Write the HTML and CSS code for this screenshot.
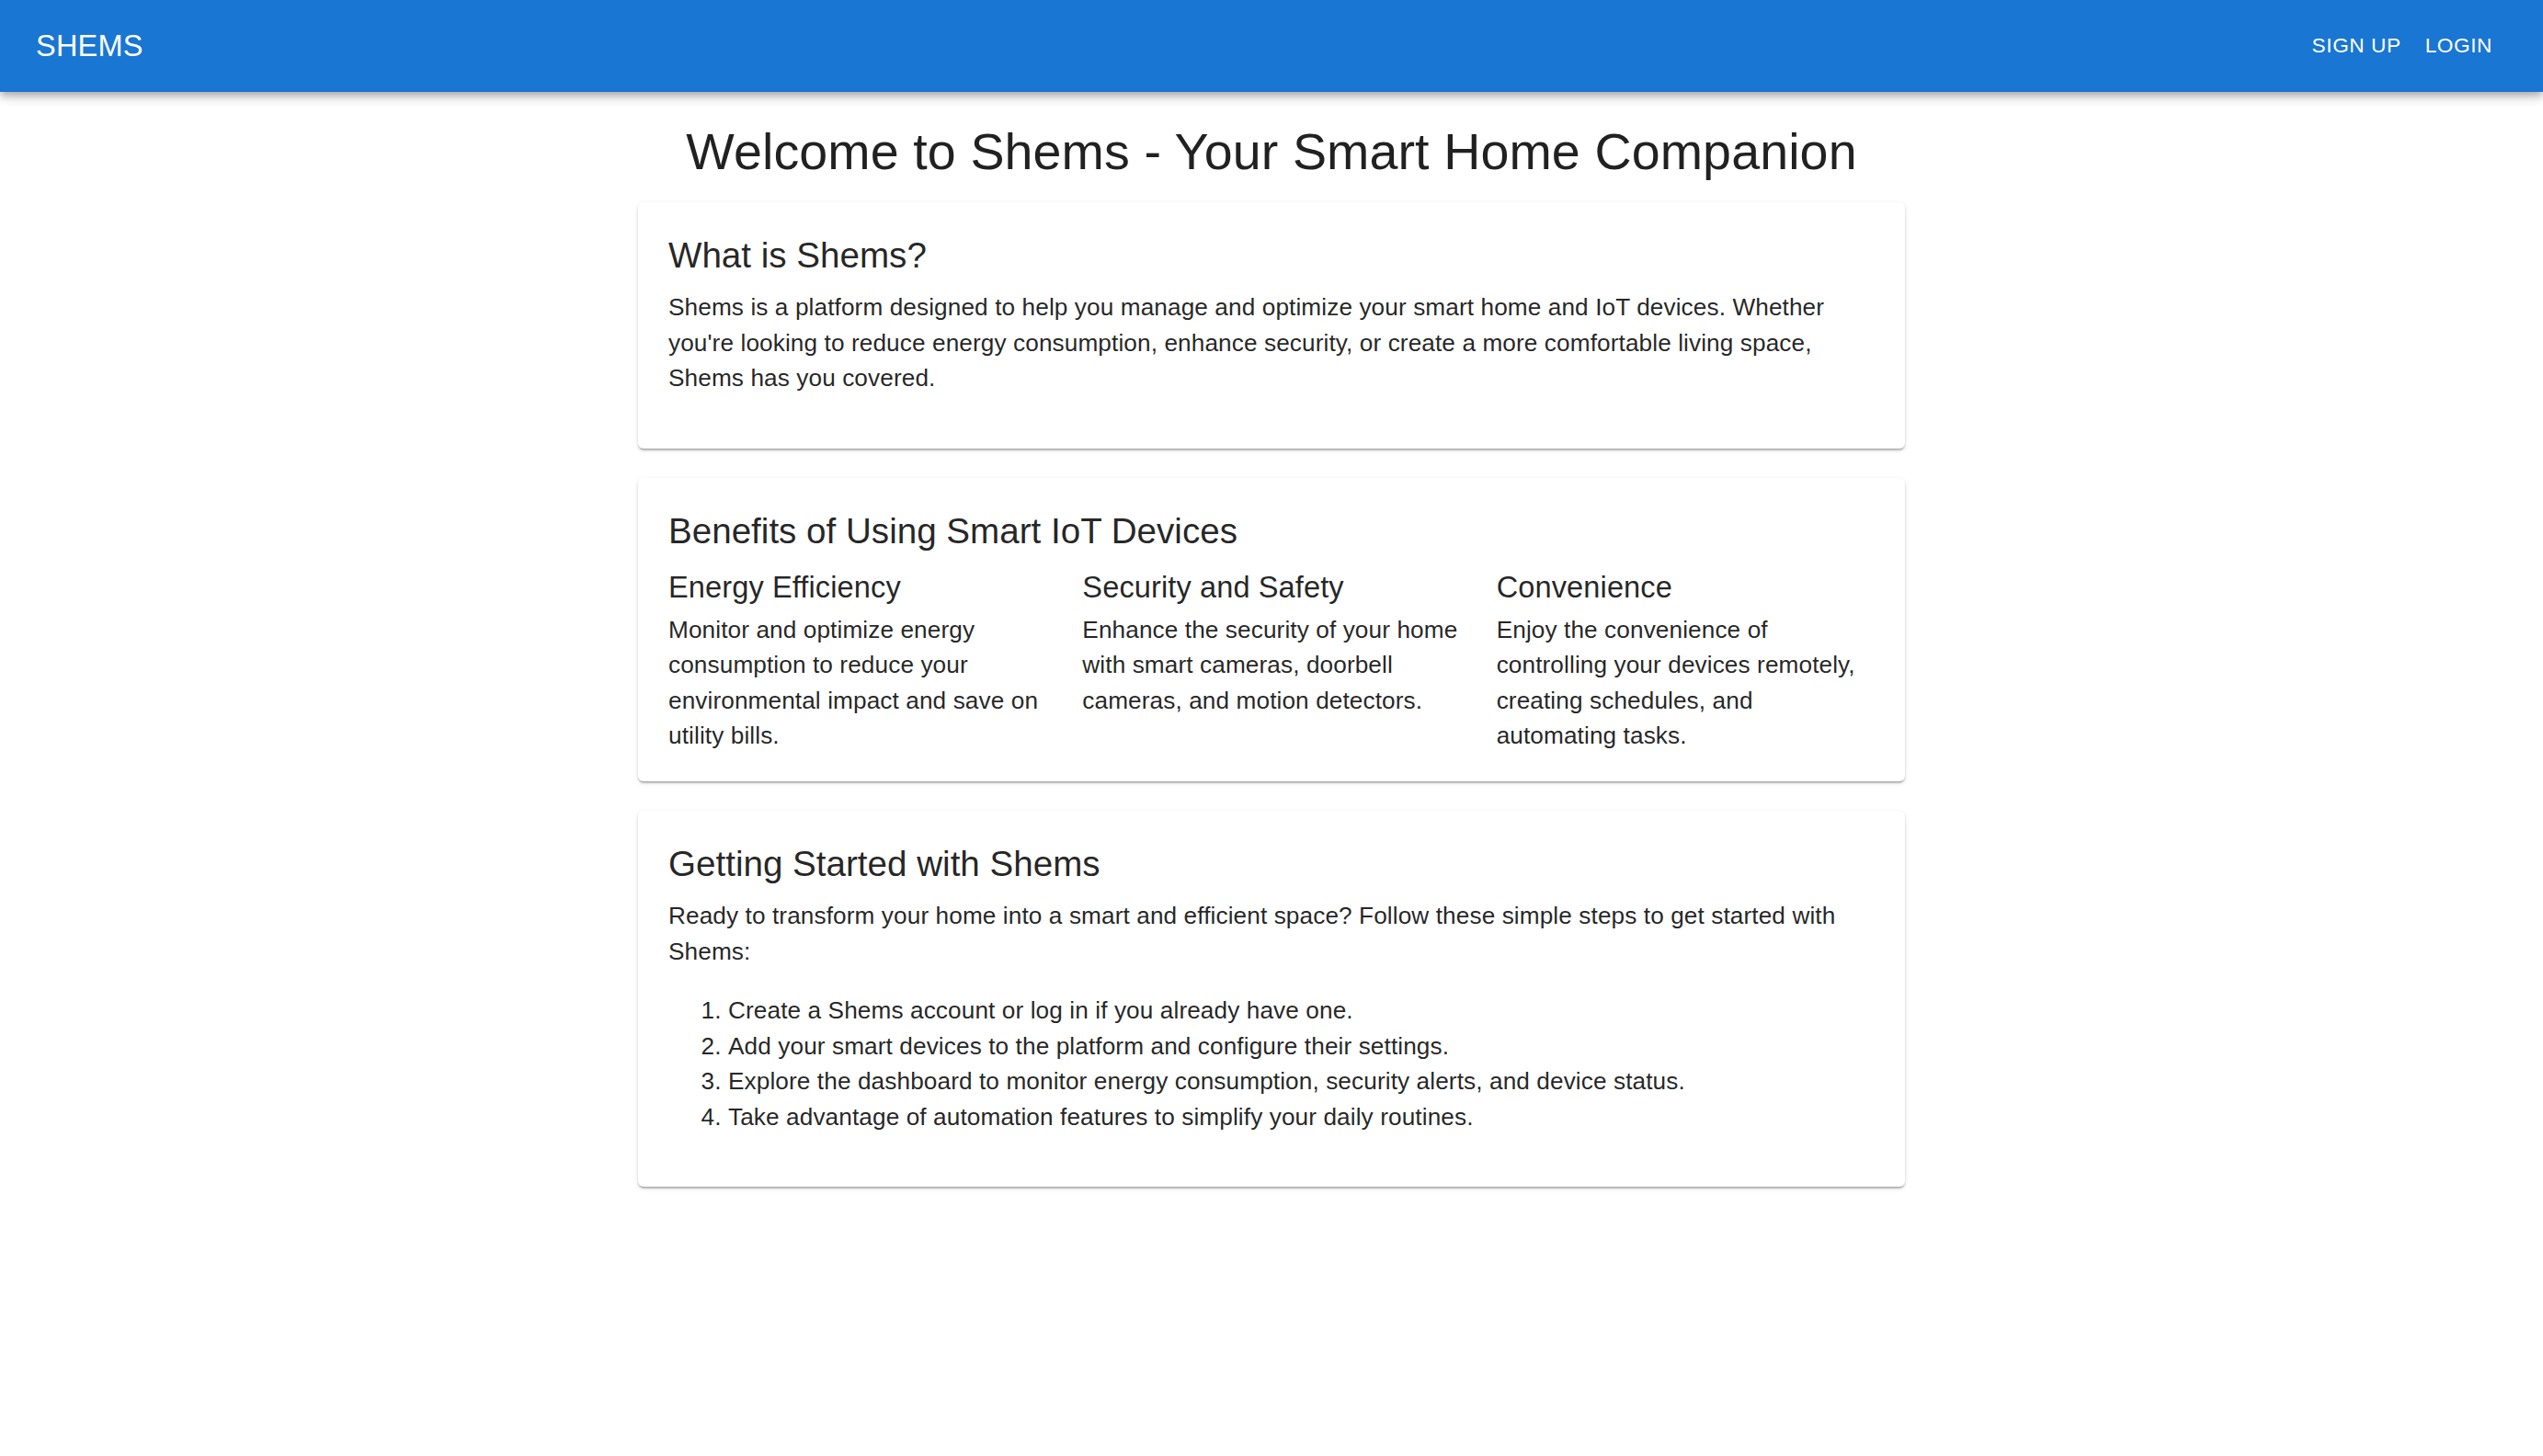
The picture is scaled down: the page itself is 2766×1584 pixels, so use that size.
FILE: index.html
```html
<!DOCTYPE html>
<html lang="en">
<head>
<meta charset="utf-8">
<title>Shems</title>
<link rel="stylesheet" href="styles.css">
</head>
<body>
<header class="appbar">
  <div class="brand">SHEMS</div>
  <nav class="nav">
    <a class="nav-btn" href="#">Sign Up</a>
    <a class="nav-btn" href="#">Login</a>
  </nav>
</header>
<main class="container">
  <h1 class="page-title">Welcome to Shems - Your Smart Home Companion</h1>

  <section class="card">
    <h2 class="card-title">What is Shems?</h2>
    <p class="body-text para">Shems is a platform designed to help you manage and optimize your smart home and IoT devices. Whether you're looking to reduce energy consumption, enhance security, or create a more comfortable living space, Shems has you covered.</p>
  </section>

  <section class="card card-benefits">
    <h2 class="card-title">Benefits of Using Smart IoT Devices</h2>
    <div class="benefits">
      <div class="benefit">
        <h3 class="sub-title">Energy Efficiency</h3>
        <p class="body-text">Monitor and optimize energy consumption to reduce your environmental impact and save on utility bills.</p>
      </div>
      <div class="benefit">
        <h3 class="sub-title">Security and Safety</h3>
        <p class="body-text">Enhance the security of your home with smart cameras, doorbell cameras, and motion detectors.</p>
      </div>
      <div class="benefit">
        <h3 class="sub-title">Convenience</h3>
        <p class="body-text">Enjoy the convenience of controlling your devices remotely, creating schedules, and automating tasks.</p>
      </div>
    </div>
  </section>

  <section class="card">
    <h2 class="card-title">Getting Started with Shems</h2>
    <p class="body-text">Ready to transform your home into a smart and efficient space? Follow these simple steps to get started with Shems:</p>
    <ol class="steps body-text">
      <li>Create a Shems account or log in if you already have one.</li>
      <li>Add your smart devices to the platform and configure their settings.</li>
      <li>Explore the dashboard to monitor energy consumption, security alerts, and device status.</li>
      <li>Take advantage of automation features to simplify your daily routines.</li>
    </ol>
  </section>
</main>
</body>
</html>
```

FILE: styles.css
```css
* { box-sizing: border-box; }

html, body {
  margin: 0;
  padding: 0;
  background: #ffffff;
  font-family: "Liberation Sans", Arial, Helvetica, sans-serif;
  color: rgba(0, 0, 0, 0.87);
}

.appbar {
  height: 100px;
  background: #1976d2;
  color: #ffffff;
  display: flex;
  align-items: center;
  justify-content: space-between;
  padding: 0 39px;
  box-shadow: 0 3px 7px -2px rgba(0, 0, 0, 0.2), 0 7px 8px 0 rgba(0, 0, 0, 0.14), 0 2px 16px 0 rgba(0, 0, 0, 0.12);
  position: relative;
  z-index: 1;
}

.brand {
  font-size: 32.5px;
  font-weight: 400;
  letter-spacing: 0.2px;
  line-height: 1.6;
}

.nav {
  display: flex;
  align-items: center;
  margin-right: 3px;
}

.nav-btn {
  color: #ffffff;
  text-decoration: none;
  text-transform: uppercase;
  font-size: 22.6px;
  font-weight: 400;
  letter-spacing: 0.6px;
  line-height: 1.75;
  padding: 10px 13px;
}

.container {
  width: 1378px;
  margin: 0 auto;
  padding: 31px 0 40px;
}

.page-title {
  margin: 0 0 20px;
  text-align: center;
  font-size: 55.6px;
  font-weight: 400;
  line-height: 1.235;
  letter-spacing: 0.1px;
}

.card {
  background: #ffffff;
  border-radius: 6px;
  box-shadow: 0 3px 2px -2px rgba(0, 0, 0, 0.2), 0 2px 2px 0 rgba(0, 0, 0, 0.14), 0 2px 5px 0 rgba(0, 0, 0, 0.12);
  padding: 32px 33px 33px;
  margin-bottom: 32px;
}

.card-benefits {
  padding-bottom: 30px;
}

.card-title {
  margin: 0 0 12px;
  font-size: 38.6px;
  font-weight: 400;
  line-height: 1.334;
}

.body-text {
  margin: 0;
  font-size: 26.2px;
  line-height: 38.5px;
  letter-spacing: 0.1px;
}

.para {
  margin-bottom: 24px;
}

.benefits {
  display: grid;
  grid-template-columns: repeat(3, 1fr);
  column-gap: 39px;
  margin-top: 3px;
}

.sub-title {
  margin: 0 0 2px;
  font-size: 32.6px;
  font-weight: 400;
  line-height: 1.5;
  letter-spacing: 0.1px;
}

.steps {
  margin: 26px 0 24px;
  padding-left: 65px;
}
```
